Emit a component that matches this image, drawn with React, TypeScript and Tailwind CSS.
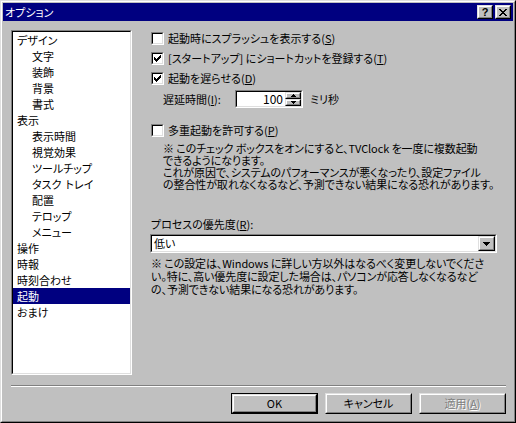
import React from "react";

const Check = () => (
  <svg width="7" height="7" viewBox="0 0 7 7" shapeRendering="crispEdges">
    <rect x="6" y="0" width="1" height="1" fill="#000" />
    <rect x="5" y="1" width="2" height="1" fill="#000" />
    <rect x="0" y="2" width="1" height="1" fill="#000" />
    <rect x="4" y="2" width="3" height="1" fill="#000" />
    <rect x="0" y="3" width="2" height="1" fill="#000" />
    <rect x="3" y="3" width="3" height="1" fill="#000" />
    <rect x="0" y="4" width="5" height="1" fill="#000" />
    <rect x="1" y="5" width="3" height="1" fill="#000" />
    <rect x="2" y="6" width="1" height="1" fill="#000" />
  </svg>
);

const CheckBox = ({ checked }: { checked?: boolean }) => (
  <div className="w-[13px] h-[13px] shrink-0 border border-t-[#808080] border-l-[#808080] border-r-white border-b-white">
    <div className="w-full h-full border border-t-black border-l-black border-r-[#dfdfdf] border-b-[#dfdfdf] bg-white flex items-center justify-center">
      {checked ? <Check /> : null}
    </div>
  </div>
);

const Raised = ({ className, children }: { className?: string; children?: React.ReactNode }) => (
  <div className={"border border-t-[#dfdfdf] border-l-[#dfdfdf] border-r-black border-b-black " + (className ?? "")}>
    <div className="w-full h-full border border-t-white border-l-white border-r-[#808080] border-b-[#808080] bg-[#c0c0c0] flex items-center justify-center">
      {children}
    </div>
  </div>
);

const U = ({ children }: { children: React.ReactNode }) => <span className="underline underline-offset-1">{children}</span>;

const items: { t: React.ReactNode; k: string; child?: boolean; sel?: boolean }[] = [
  { k: "a", t: "デザイン" },
  { k: "b", t: "文字", child: true },
  { k: "c", t: "装飾", child: true },
  { k: "d", t: "背景", child: true },
  { k: "e", t: "書式", child: true },
  { k: "f", t: "表示" },
  { k: "g", t: "表示時間", child: true },
  { k: "h", t: "視覚効果", child: true },
  { k: "i", t: "ツールチップ", child: true },
  { k: "j", t: <>タスク<span className="inline-block w-[4px]" />トレイ</>, child: true },
  { k: "k", t: "配置", child: true },
  { k: "l", t: "テロップ", child: true },
  { k: "m", t: "メニュー", child: true },
  { k: "n", t: "操作" },
  { k: "o", t: "時報" },
  { k: "p", t: "時刻合わせ" },
  { k: "q", t: "起動", sel: true },
  { k: "r", t: "おまけ" },
];

export default function App() {
  return (
    <div className="w-[516px] h-[423px] bg-[#c0c0c0] border border-t-[#dfdfdf] border-l-[#dfdfdf] border-r-black border-b-black font-['Noto_Sans_CJK_JP',sans-serif] text-[11px] text-black [font-feature-settings:'palt'] select-none">
      <div className="w-full h-full border border-t-white border-l-white border-r-[#808080] border-b-[#808080] p-px flex flex-col">
        {/* Title bar */}
        <div className="h-[18px] bg-[#000080] flex items-center pl-[2px] pr-[2px] shrink-0">
          <span className="text-white leading-[18px] flex-1">オプション</span>
          <Raised className="w-[16px] h-[14px]">
            <span className="font-['Liberation_Sans',sans-serif] font-bold text-[11px] leading-none mt-px">?</span>
          </Raised>
          <Raised className="w-[16px] h-[14px] ml-[2px]">
            <svg width="8" height="7" viewBox="0 0 8 7" shapeRendering="crispEdges">
              <path d="M0 0h2v1h-2zM6 0h2v1h-2zM1 1h2v1h-2zM5 1h2v1h-2zM2 2h4v1h-4zM3 3h2v1h-2zM2 4h4v1h-4zM1 5h2v1h-2zM5 5h2v1h-2zM0 6h2v1h-2zM6 6h2v1h-2z" fill="#000" />
            </svg>
          </Raised>
        </div>

        {/* Content */}
        <div className="flex-1 flex flex-col pl-[8px] pr-[7px] pt-[9px]">
          <div className="flex h-[345px]">
            {/* List box */}
            <div className="w-[121px] h-[345px] border border-t-[#808080] border-l-[#808080] border-r-white border-b-white shrink-0">
              <div className="w-full h-full border border-t-black border-l-black border-r-[#dfdfdf] border-b-[#dfdfdf] bg-white">
                {items.map((it) => (
                  <div
                    key={it.k}
                    className={
                      "h-[16px] leading-[16px] whitespace-nowrap " +
                      (it.child ? "pl-[19px] " : "pl-[4px] ") +
                      (it.sel ? "bg-[#000080] text-white" : "")
                    }
                  >
                    {it.t}
                  </div>
                ))}
              </div>
            </div>

            {/* Right panel */}
            <div className="ml-[19px] flex-1 flex flex-col">
              <div className="flex items-start h-[20px]">
                <div className="mt-[2px]"><CheckBox /></div>
                <span className="ml-[4px] mt-[2px] leading-[13px] whitespace-nowrap">起動時にスプラッシュを表示する(<U>S</U>)</span>
              </div>
              <div className="flex items-start h-[20px]">
                <div className="mt-[2px]"><CheckBox checked /></div>
                <span className="ml-[4px] mt-[2px] leading-[13px] whitespace-nowrap">[スタートアップ] にショートカットを登録する(<U>T</U>)</span>
              </div>
              <div className="flex items-start h-[20px]">
                <div className="mt-[2px]"><CheckBox checked /></div>
                <span className="ml-[4px] mt-[2px] leading-[13px] whitespace-nowrap">起動を遅らせる(<U>D</U>)</span>
              </div>

              <div className="flex items-center h-[18px]">
                <span className="ml-[12px] w-[72px] whitespace-nowrap">遅延時間(<U>I</U>):</span>
                <div className="w-[68px] h-[18px] border border-t-[#808080] border-l-[#808080] border-r-white border-b-white">
                  <div className="w-full h-full border border-t-black border-l-black border-r-[#dfdfdf] border-b-[#dfdfdf] bg-white flex">
                    <div className="flex-1 text-right pr-[2px] leading-[14px] text-[12px]">100</div>
                    <div className="w-[16px] flex flex-col">
                      <Raised className="w-[16px] h-[7px]">
                        <svg width="5" height="3" viewBox="0 0 5 3" shapeRendering="crispEdges"><path d="M2 0h1v1h1v1h1v1h-5v-1h1v-1h1z" fill="#000" /></svg>
                      </Raised>
                      <Raised className="w-[16px] h-[7px]">
                        <svg width="5" height="3" viewBox="0 0 5 3" shapeRendering="crispEdges"><path d="M0 0h5v1h-1v1h-1v1h-1v-1h-1v-1h-1z" fill="#000" /></svg>
                      </Raised>
                    </div>
                  </div>
                </div>
                <span className="ml-[7px] whitespace-nowrap">ミリ秒</span>
              </div>

              <div className="flex items-start h-[20px] mt-[14px]">
                <div className="mt-[2px]"><CheckBox /></div>
                <span className="ml-[4px] mt-[2px] leading-[13px] whitespace-nowrap">多重起動を許可する(<U>P</U>)</span>
              </div>
              <div className="ml-[12px] leading-[12px] whitespace-nowrap tracking-[-0.1px]">
                ※ このチェック ボックスをオンにすると、TVClock を一度に複数起動
                <br />
                できるようになります。
                <br />
                これが原因で、システムのパフォーマンスが悪くなったり、設定ファイル
                <br />
                の整合性が取れなくなるなど、予測できない結果になる恐れがあります。
              </div>

              <div className="mt-[28px] leading-[12px] whitespace-nowrap">プロセスの優先度(<U>R</U>):</div>
              <div className="mt-[4px] w-[347px] h-[19px] -ml-px border border-t-[#808080] border-l-[#808080] border-r-white border-b-white">
                <div className="w-full h-full border border-t-black border-l-black border-r-[#dfdfdf] border-b-[#dfdfdf] bg-white flex items-center">
                  <span className="flex-1 pl-[2px] leading-[15px]">低い</span>
                  <Raised className="w-[17px] h-[15px]">
                    <svg width="7" height="4" viewBox="0 0 7 4" shapeRendering="crispEdges"><path d="M0 0h7v1h-1v1h-1v1h-1v1h-1v-1h-1v-1h-1v-1h-1z" fill="#000" /></svg>
                  </Raised>
                </div>
              </div>
              <div className="mt-[4px] leading-[13px] whitespace-nowrap tracking-[-0.1px]">
                ※ この設定は、Windows に詳しい方以外はなるべく変更しないでくださ
                <br />
                い。特に、高い優先度に設定した場合は、パソコンが応答しなくなるなど
                <br />
                の、予測できない結果になる恐れがあります。
              </div>
            </div>
          </div>

          {/* Separator */}
          <div className="mt-[10px] h-[2px] border-t border-t-[#808080] border-b border-b-white" />

          {/* Buttons */}
          <div className="mt-[6px] flex justify-end gap-[7px]">
            <div className="w-[87px] h-[21px] border border-black">
              <Raised className="w-full h-full">
                <span className="leading-none">OK</span>
              </Raised>
            </div>
            <Raised className="w-[87px] h-[21px]">
              <span className="leading-none">キャンセル</span>
            </Raised>
            <Raised className="w-[87px] h-[21px]">
              <span className="leading-none text-[#808080] [text-shadow:1px_1px_0_#fff]">適用(<U>A</U>)</span>
            </Raised>
          </div>
        </div>
      </div>
    </div>
  );
}
